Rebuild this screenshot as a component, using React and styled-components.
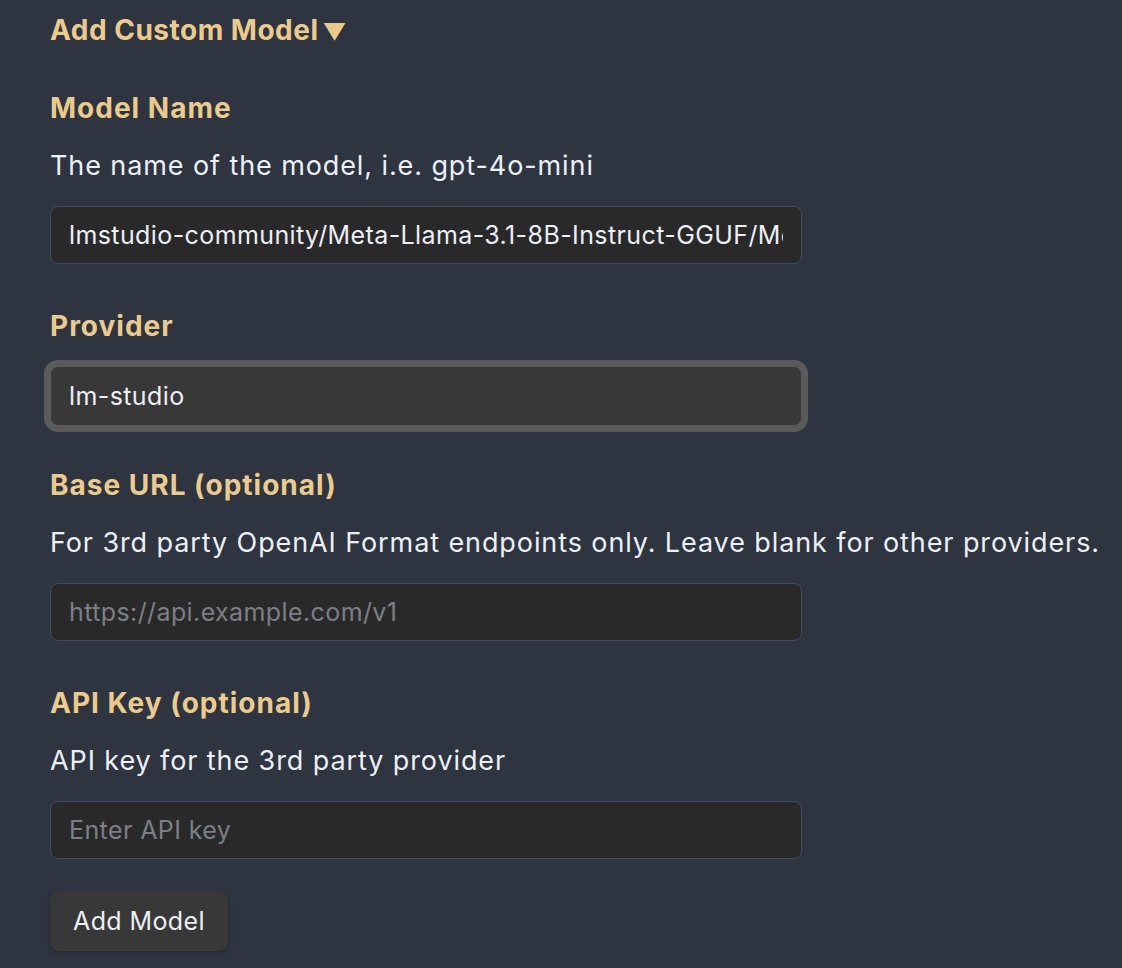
import React from "react";
import styled, { createGlobalStyle } from "styled-components";

const Global = createGlobalStyle`
  html, body { margin: 0; padding: 0; background: #2e3440; }
  body { font-family: Inter, "Noto Sans", sans-serif; color: #eceff4; }
  * { box-sizing: border-box; }
`;

const Page = styled.div`
  padding: 12px 0 20px 50px;
  min-height: 968px;
  background: #2e3440;
`;

const Summary = styled.div`
  font-size: 28px;
  line-height: 36px;
  font-weight: 700;
  letter-spacing: 0.5px;
  color: #ebcb8b;
  margin-bottom: 40px;
`;

const Caret = styled.span`
  font-size: 23px;
  margin-left: 4px;
`;

const Form = styled.div`
  display: flex;
  flex-direction: column;
`;

const Field = styled.div`
  display: flex;
  flex-direction: column;
  gap: 22px;
  margin-top: ${(p) => p.$gap || 0}px;
`;

const Label = styled.div`
  font-size: 28px;
  line-height: 36px;
  font-weight: 700;
  letter-spacing: 1px;
  color: #ebcb8b;
`;

const Desc = styled.div`
  font-size: 27px;
  line-height: 36px;
  letter-spacing: 0.9px;
  color: #eceff4;
  white-space: nowrap;
`;

const Input = styled.input`
  width: 752px;
  height: ${(p) => (p.$focused ? "60px" : "58px")};
  background: ${(p) => (p.$focused ? "#383838" : "#292929")};
  border: 1px solid ${(p) => (p.$focused ? "#5b5b5b" : "#434c5e")};
  box-shadow: ${(p) => (p.$focused ? "0 0 0 6px #5b5b5b" : "none")};
  border-radius: 8px;
  padding: 0 18px;
  font-family: Inter, "Noto Sans", sans-serif;
  font-size: 25px;
  letter-spacing: 0.4px;
  color: #eceff4;
  outline: none;
  &::placeholder { color: #7c7f86; }
`;

const Button = styled.button`
  align-self: flex-start;
  margin-top: 32px;
  width: 178px;
  height: 60px;
  background: #383838;
  border: none;
  border-radius: 9px;
  box-shadow: 0 2px 4px rgba(0, 0, 0, 0.25);
  font-family: Inter, "Noto Sans", sans-serif;
  font-size: 25px;
  letter-spacing: 0.4px;
  color: #eceff4;
  cursor: pointer;
`;

export default function App() {
  return (
    <>
      <Global />
      <Page>
        <Summary>
          Add Custom Model<Caret>▼</Caret>
        </Summary>
        <Form>
          <Field>
            <Label>Model Name</Label>
            <Desc>The name of the model, i.e. gpt-4o-mini</Desc>
            <Input defaultValue="lmstudio-community/Meta-Llama-3.1-8B-Instruct-GGUF/Meta-Llama-3.1-8B-Instruct-Q4_K_M.gguf" />
          </Field>
          <Field $gap={44}>
            <Label>Provider</Label>
            <Input $focused defaultValue="lm-studio" />
          </Field>
          <Field $gap={41}>
            <Label>Base URL (optional)</Label>
            <Desc>For 3rd party OpenAI Format endpoints only. Leave blank for other providers.</Desc>
            <Input placeholder="https://api.example.com/v1" />
          </Field>
          <Field $gap={44}>
            <Label>API Key (optional)</Label>
            <Desc>API key for the 3rd party provider</Desc>
            <Input placeholder="Enter API key" />
          </Field>
          <Button>Add Model</Button>
        </Form>
      </Page>
    </>
  );
}
